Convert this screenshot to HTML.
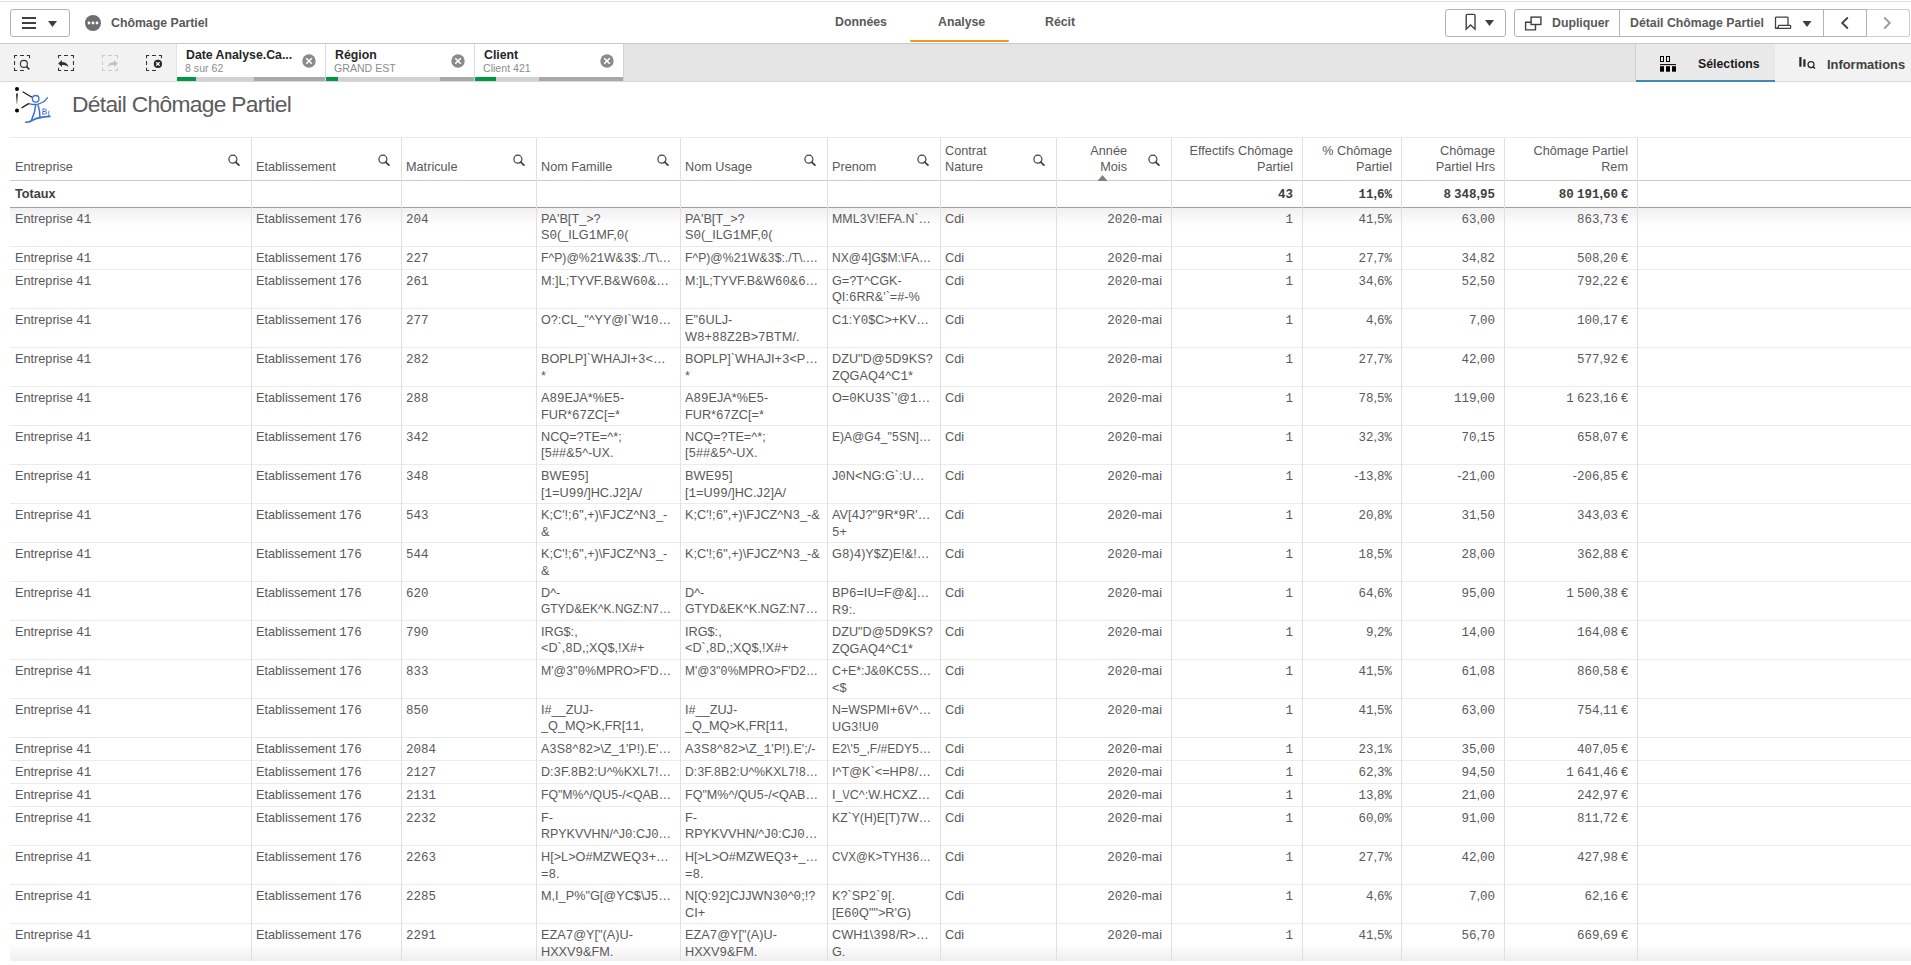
<!DOCTYPE html>
<html><head><meta charset="utf-8">
<style>
*{box-sizing:border-box}
html,body{margin:0;padding:0}
body{width:1911px;height:965px;overflow:hidden;background:#fff;position:relative;font-family:"Liberation Sans",sans-serif;color:#595959}
.a{position:absolute}
.b{font-weight:700}
.topline{left:0;top:1px;width:1911px;height:1px;background:#dcdde2}
.btn{border:1px solid #b3b3b3;border-radius:3px;background:#fff}
.tab{top:15px;font-size:12.3px;font-weight:700;color:#595959;white-space:nowrap}
.tbar{left:0;top:43px;width:1911px;height:39px;background:#e4e4e4;border-top:1px solid #c8c8c8;border-bottom:1px solid #d9d9d9}
.chip{top:44px;height:37px;width:148px;background:#fff}
.chip .t{position:absolute;left:9px;top:4px;font-size:12.3px;font-weight:700;color:#262626;white-space:nowrap}
.chip .s{position:absolute;left:8px;top:18px;font-size:10.6px;color:#8c8c8c;white-space:nowrap}
.chip .x{position:absolute;left:125px;top:10px}
.pb{top:77px;height:4px}
.c{position:absolute;font-size:12.7px;line-height:16px;padding-top:3px;white-space:nowrap;color:#595959}
.c i{font-style:normal;font-family:"Liberation Mono",monospace;font-size:12.5px}
.c u{display:inline-block;width:3px}
.r{text-align:right}
.hl{position:absolute;left:10px;width:1901px;height:1px;background:#ebebeb}
.vl{position:absolute;top:138px;width:1px;height:823px;background:#e0e0e0}
.hd{position:absolute;font-size:12.7px;line-height:16px;white-space:nowrap;color:#595959}
.srch{position:absolute;top:153px;width:13px;height:13px}
.srch svg{display:block}
.tt{position:absolute;top:186px;font-size:12.7px;line-height:16px;font-weight:700;white-space:nowrap;color:#404040}
.tt i{font-style:normal;font-family:"Liberation Mono",monospace;font-size:12.5px}
.tt u{display:inline-block;width:3px}
.c{overflow:hidden}
.ln{font-weight:400;display:inline-block;transform-origin:0 0}
</style></head>
<body>
<div class="a topline"></div>

<!-- menu button -->
<div class="a btn" style="left:10px;top:9px;width:60px;height:28px"></div>
<div class="a" style="left:22px;top:17px;width:14px;height:2px;background:#404040"></div>
<div class="a" style="left:22px;top:22px;width:14px;height:2px;background:#404040"></div>
<div class="a" style="left:22px;top:27px;width:14px;height:2px;background:#404040"></div>
<svg class="a" style="left:48px;top:21px" width="9" height="6"><path d="M0 0H9L4.5 6Z" fill="#404040"/></svg>

<!-- dots circle -->
<svg class="a" style="left:85px;top:15px" width="16" height="16"><circle cx="8" cy="8" r="8" fill="#6e6e6e"/><circle cx="4" cy="8" r="1.4" fill="#fff"/><circle cx="8" cy="8" r="1.4" fill="#fff"/><circle cx="12" cy="8" r="1.4" fill="#fff"/></svg>
<div class="a tab" style="left:111px;top:16px;color:#595959">Chômage Partiel</div>

<!-- nav tabs -->
<div class="a tab" style="left:835px">Données</div>
<div class="a tab" style="left:938px">Analyse</div>
<div class="a tab" style="left:1045px">Récit</div>
<div class="a" style="left:910px;top:40px;width:99px;height:2px;background:#ef9a1a;border-radius:1px"></div>

<!-- right buttons -->
<div class="a btn" style="left:1445px;top:9px;width:61px;height:28px"></div>
<div class="a btn" style="left:1514px;top:9px;width:396px;height:28px"></div>
<div class="a" style="left:1619px;top:10px;width:1px;height:26px;background:#b3b3b3"></div>
<div class="a" style="left:1823px;top:10px;width:1px;height:26px;background:#b3b3b3"></div>
<div class="a" style="left:1867px;top:9px;width:43px;height:28px;border:1px solid #cfcfcf;border-left:0;border-radius:0 3px 3px 0;background:#fff"></div>
<div class="a" style="left:1866px;top:10px;width:1px;height:26px;background:#b3b3b3"></div>
<div class="a tab" style="left:1552px;top:16px">Dupliquer</div>
<div class="a tab" style="left:1630px;top:16px">Détail Chômage Partiel</div>

<!-- toolbar -->
<div class="a tbar"></div>
<div class="a" style="left:0;top:44px;width:176px;height:37px;background:#f2f2f2"></div>
<div class="a chip" style="left:177px"><div class="t">Date Analyse.Ca...</div><div class="s">8 sur 62</div><svg class="x" width="14" height="14" viewBox="0 0 14 14"><circle cx="7" cy="7" r="6.7" fill="#8a8a8a"/><path d="M4.2 4.2L9.8 9.8M9.8 4.2L4.2 9.8" stroke="#fff" stroke-width="1.6"/></svg></div>
<div class="a chip" style="left:326px"><div class="t">Région</div><div class="s">GRAND EST</div><svg class="x" width="14" height="14" viewBox="0 0 14 14"><circle cx="7" cy="7" r="6.7" fill="#8a8a8a"/><path d="M4.2 4.2L9.8 9.8M9.8 4.2L4.2 9.8" stroke="#fff" stroke-width="1.6"/></svg></div>
<div class="a chip" style="left:475px"><div class="t">Client</div><div class="s">Client 421</div><svg class="x" width="14" height="14" viewBox="0 0 14 14"><circle cx="7" cy="7" r="6.7" fill="#8a8a8a"/><path d="M4.2 4.2L9.8 9.8M9.8 4.2L4.2 9.8" stroke="#fff" stroke-width="1.6"/></svg></div>

<div class="a" style="left:325px;top:44px;width:1px;height:37px;background:#d9d9d9"></div>
<div class="a" style="left:474px;top:44px;width:1px;height:37px;background:#d9d9d9"></div>
<div class="a" style="left:623px;top:44px;width:1px;height:37px;background:#d4d4d4"></div>
<div class="a" style="left:1775px;top:44px;width:136px;height:37px;background:#f2f2f2"></div>
<div class="a" style="left:1635px;top:44px;width:140px;height:37px;background:#e9e9e9;border-left:1px solid #d0d0d0"></div>
<div class="a" style="left:1636px;top:80px;width:139px;height:2px;background:#3f8ab3"></div>
<div class="a tab" style="left:1698px;top:57px;color:#1a1a1a">Sélections</div>
<div class="a tab" style="left:1827px;top:57px;color:#404040;font-size:12.9px">Informations</div>


<!-- toolbar icons -->
<svg class="a" style="left:14px;top:55px" width="16" height="16" viewBox="0 0 16 16"><path d="M0.5 3.2V0.5H3.2M6 0.5H10M12.8 0.5H15.5V3.2M10 15.5H6M3.2 15.5H0.5V12.8M0.5 10V6" fill="none" stroke="#333" stroke-width="1.1"/><circle cx="9.9" cy="8.9" r="3.5" fill="none" stroke="#333" stroke-width="1.1"/><path d="M12.4 11.4L15.3 14.5" stroke="#333" stroke-width="1.7"/></svg>
<svg class="a" style="left:58px;top:55px" width="16" height="16" viewBox="0 0 16 16"><path d="M0.5 3.2V0.5H3.2M6 0.5H10M12.8 0.5H15.5V3.2M15.5 6V10M15.5 12.8V15.5H12.8M10 15.5H6M3.2 15.5H0.5V12.8" fill="none" stroke="#333" stroke-width="1.1"/><path d="M0.2 8.4L3.9 4.9V7C7.4 7 9.7 8.8 10.5 12C8.9 10.3 6.8 9.9 3.9 9.9V11.9Z" fill="#333"/></svg>
<svg class="a" style="left:102px;top:55px" width="16" height="16" viewBox="0 0 16 16"><path d="M0.5 3.2V0.5H3.2M6 0.5H10M12.8 0.5H15.5V3.2M15.5 12.8V15.5H12.8M10 15.5H6M3.2 15.5H0.5V12.8M0.5 10V6" fill="none" stroke="#c9c9c9" stroke-width="1.1"/><path d="M15.8 8.4L12.1 4.9V7C8.6 7 6.3 8.8 5.5 12C7.1 10.3 9.2 9.9 12.1 9.9V11.9Z" fill="#c4c4c4"/></svg>
<svg class="a" style="left:146px;top:55px" width="16" height="16" viewBox="0 0 16 16"><path d="M0.5 3.2V0.5H3.2M6 0.5H10M12.8 0.5H15.5V3.2M10 15.5H6M3.2 15.5H0.5V12.8M0.5 10V6" fill="none" stroke="#333" stroke-width="1.1"/><circle cx="11.9" cy="8.9" r="4.1" fill="#262626"/><path d="M10.2 7.2L13.6 10.6M13.6 7.2L10.2 10.6" stroke="#fff" stroke-width="1.3"/></svg>

<!-- chip progress bars -->
<div class="a pb" style="left:177px;width:19px;background:#009845"></div>
<div class="a pb" style="left:196px;width:58px;background:#d2d2d2"></div>
<div class="a pb" style="left:254px;width:71px;background:#a8a8a8"></div>
<div class="a pb" style="left:326px;width:12px;background:#009845"></div>
<div class="a pb" style="left:338px;width:102px;background:#d2d2d2"></div>
<div class="a pb" style="left:440px;width:34px;background:#a8a8a8"></div>
<div class="a pb" style="left:475px;width:21px;background:#009845"></div>
<div class="a pb" style="left:496px;width:43px;background:#d2d2d2"></div>
<div class="a pb" style="left:539px;width:84px;background:#a8a8a8"></div>

<!-- selections icon -->
<svg class="a" style="left:1660px;top:56px" width="17" height="16" viewBox="0 0 17 16"><rect x="0.5" y="0.5" width="3" height="5" fill="none" stroke="#000" stroke-width="1"/><rect x="6.5" y="0.5" width="3" height="5" fill="none" stroke="#000" stroke-width="1"/><rect x="0" y="8.1" width="16" height="1" fill="#000"/><rect x="0" y="10.2" width="4" height="5.5" fill="#000"/><rect x="6" y="10.2" width="4" height="5.5" fill="#000"/><rect x="12" y="10.2" width="4" height="5.5" fill="#000"/></svg>
<!-- insights icon -->
<svg class="a" style="left:1798px;top:56px" width="18" height="14" viewBox="0 0 18 14"><rect x="1.3" y="1" width="2.2" height="9.7" fill="#262626"/><rect x="5.3" y="3.3" width="2.2" height="7.4" fill="#262626"/><circle cx="13" cy="8.6" r="3" fill="none" stroke="#262626" stroke-width="1.2"/><path d="M15.1 10.7L17 12.6" stroke="#262626" stroke-width="1.4"/></svg>

<!-- bookmark -->
<svg class="a" style="left:1464px;top:13px" width="13" height="18" viewBox="0 0 13 18"><path d="M2.2 16.2V2.6Q2.2 1.4 3.4 1.4H9.8Q11 1.4 11 2.6V16.2L6.6 12Z" fill="none" stroke="#404040" stroke-width="1.4" stroke-linejoin="miter"/></svg>
<svg class="a" style="left:1485px;top:20px" width="9" height="6"><path d="M0 0H9L4.5 6Z" fill="#404040"/></svg>
<!-- duplicate -->
<svg class="a" style="left:1524px;top:16px" width="19" height="16" viewBox="0 0 19 16"><rect x="7.1" y="1.1" width="9.8" height="7.4" fill="none" stroke="#404040" stroke-width="1.4"/><path d="M7.1 6.2H1.6V13.9H11.5V8.5" fill="none" stroke="#404040" stroke-width="1.4"/></svg>
<!-- sheet icon -->
<svg class="a" style="left:1774px;top:16px" width="18" height="14" viewBox="0 0 18 14"><path d="M4.5 12.4H2.2Q1.5 12.4 1.5 11.7V1.9Q1.5 1.2 2.2 1.2H13.3Q14 1.2 14 1.9V9.2" fill="none" stroke="#404040" stroke-width="1.3"/><path d="M5.2 9.3H15.9Q16.6 9.3 16.6 10V11.7Q16.6 12.4 15.9 12.4H2.2Q4.5 12.4 4.5 10Q4.5 9.3 5.2 9.3Z" fill="none" stroke="#404040" stroke-width="1.3"/></svg>
<svg class="a" style="left:1802px;top:21px" width="10" height="6"><path d="M0.5 0H9.5L5 6Z" fill="#404040"/></svg>
<!-- chevrons -->
<svg class="a" style="left:1839px;top:16px" width="12" height="14" viewBox="0 0 12 14"><path d="M8.8 1.5L3.2 7L8.8 12.5" fill="none" stroke="#404040" stroke-width="1.8"/></svg>
<svg class="a" style="left:1881px;top:16px" width="12" height="14" viewBox="0 0 12 14"><path d="M3.2 1.5L8.8 7L3.2 12.5" fill="none" stroke="#9a9a9a" stroke-width="1.8"/></svg>

<!-- logo -->
<svg class="a" style="left:12px;top:84px" width="44" height="42" viewBox="0 0 44 42">
<defs><linearGradient id="lg" x1="0" y1="0" x2="0" y2="1"><stop offset="0" stop-color="#000"/><stop offset="1" stop-color="#000" stop-opacity="0.15"/></linearGradient></defs>
<circle cx="5" cy="5" r="2" fill="#000"/><circle cx="5" cy="26.5" r="2" fill="#000"/>
<path d="M5 9.5L4.8 20" stroke="url(#lg)" stroke-width="1.6"/>
<path d="M10.6 7.8L20 13.3" stroke="#111" stroke-width="1.1"/>
<path d="M9.5 24L17 19.4" stroke="#111" stroke-width="1.3"/>
<g fill="none" stroke="#3b6fd6" stroke-linecap="round">
<circle cx="23.7" cy="14.8" r="3.3" stroke-width="1.3"/>
<path d="M17 19.6Q23 21.5 28 19.5T35.4 13.8" stroke-width="1.3"/>
<path d="M23.7 20.8Q23 29 19.6 35.8" stroke-width="1.5"/>
<path d="M26 20.6Q28 27 28 34" stroke-width="1.5"/>
<path d="M13.8 38Q16 39 21 36T38 32.4" stroke-width="1.6"/>
<path d="M31.2 25L30.6 30M31.2 25Q35.2 24.3 34.2 26.8Q33 27.6 31 27.5Q35.8 27.4 34.4 29.6Q33 30.6 30.6 30" stroke-width="0.9"/>
<path d="M36.8 27.2L36.6 32.2M35.8 32.4H38" stroke-width="0.8"/>
</g>
</svg>

<!-- title -->
<div class="a" style="left:72px;top:91px;font-size:22.8px;letter-spacing:-0.7px;color:#5c5c5c;white-space:nowrap">Détail Chômage Partiel</div>

<!--TABLE-->
<div class="a" style="left:10px;top:137px;width:1901px;height:1px;background:#ebebeb"></div>
<div class="a" style="left:10px;top:180px;width:1901px;height:1px;background:#cccccc"></div>
<div class="a" style="left:10px;top:207px;width:1901px;height:1px;background:#a0a0a0"></div>
<div id="tb" class="a" style="left:10px;top:208px;width:1901px;height:753px;overflow:hidden">
<div class="a" style="left:0;top:0;width:1901px;height:18px;background:linear-gradient(#f0f0f0,rgba(255,255,255,0))"></div>
<div class="a" style="left:0;bottom:0;width:1901px;height:18px;background:linear-gradient(rgba(255,255,255,0),#efefef)"></div>
<div class="a" style="left:-10px;top:-208px;width:1911px;height:1200px">
<div class="c" style="left:15px;width:230px;top:208px">Entreprise <i>41</i></div>
<div class="c" style="left:256px;width:139px;top:208px">Etablissement <i>176</i></div>
<div class="c" style="left:406px;width:124px;top:208px"><i>204</i></div>
<div class="c" style="left:541px;width:133px;top:208px"><b class="ln">PA'B[T_&gt;?</b><br><b class="ln">S<i>0</i>(_ILG<i>1</i>MF,<i>0</i>(</b></div>
<div class="c" style="left:685px;width:136px;top:208px"><b class="ln">PA'B[T_&gt;?</b><br><b class="ln">S<i>0</i>(_ILG<i>1</i>MF,<i>0</i>(</b></div>
<div class="c" style="left:832px;width:102px;top:208px"><b class="ln" style="transform:scaleX(0.9775)">MML<i>3</i>V!EFA.N`…</b></div>
<div class="c" style="left:945px;width:105px;top:208px">Cdi</div>
<div class="c r" style="left:971px;width:191px;top:208px"><i>2020</i>-mai</div>
<div class="c r" style="left:1102px;width:191px;top:208px"><i>1</i></div>
<div class="c r" style="left:1201px;width:191px;top:208px"><i>41</i>,<i>5%</i></div>
<div class="c r" style="left:1304px;width:191px;top:208px"><i>63</i>,<i>00</i></div>
<div class="c r" style="left:1437px;width:191px;top:208px"><i>863</i>,<i>73</i><u></u>€</div>
<div class="hl" style="top:246px"></div>
<div class="c" style="left:15px;width:230px;top:247px">Entreprise <i>41</i></div>
<div class="c" style="left:256px;width:139px;top:247px">Etablissement <i>176</i></div>
<div class="c" style="left:406px;width:124px;top:247px"><i>227</i></div>
<div class="c" style="left:541px;width:133px;top:247px"><b class="ln" style="transform:scaleX(0.9620)">F^P)@%<i>21</i>W&amp;<i>3</i>$:./T\…</b></div>
<div class="c" style="left:685px;width:136px;top:247px"><b class="ln" style="transform:scaleX(0.9591)">F^P)@%<i>21</i>W&amp;<i>3</i>$:./T\.…</b></div>
<div class="c" style="left:832px;width:102px;top:247px"><b class="ln" style="transform:scaleX(0.9491)">NX@<i>4</i>]G$M:\FA…</b></div>
<div class="c" style="left:945px;width:105px;top:247px">Cdi</div>
<div class="c r" style="left:971px;width:191px;top:247px"><i>2020</i>-mai</div>
<div class="c r" style="left:1102px;width:191px;top:247px"><i>1</i></div>
<div class="c r" style="left:1201px;width:191px;top:247px"><i>27</i>,<i>7%</i></div>
<div class="c r" style="left:1304px;width:191px;top:247px"><i>34</i>,<i>82</i></div>
<div class="c r" style="left:1437px;width:191px;top:247px"><i>508</i>,<i>20</i><u></u>€</div>
<div class="hl" style="top:269px"></div>
<div class="c" style="left:15px;width:230px;top:270px">Entreprise <i>41</i></div>
<div class="c" style="left:256px;width:139px;top:270px">Etablissement <i>176</i></div>
<div class="c" style="left:406px;width:124px;top:270px"><i>261</i></div>
<div class="c" style="left:541px;width:133px;top:270px"><b class="ln">M:]L;TYVF.B&amp;W<i>60</i>&amp;…</b></div>
<div class="c" style="left:685px;width:136px;top:270px"><b class="ln" style="transform:scaleX(0.9827)">M:]L;TYVF.B&amp;W<i>60</i>&amp;<i>6</i>…</b></div>
<div class="c" style="left:832px;width:102px;top:270px"><b class="ln">G=?T^CGK-</b><br><b class="ln">QI:<i>6</i>RR&amp;'`=#-%</b></div>
<div class="c" style="left:945px;width:105px;top:270px">Cdi</div>
<div class="c r" style="left:971px;width:191px;top:270px"><i>2020</i>-mai</div>
<div class="c r" style="left:1102px;width:191px;top:270px"><i>1</i></div>
<div class="c r" style="left:1201px;width:191px;top:270px"><i>34</i>,<i>6%</i></div>
<div class="c r" style="left:1304px;width:191px;top:270px"><i>52</i>,<i>50</i></div>
<div class="c r" style="left:1437px;width:191px;top:270px"><i>792</i>,<i>22</i><u></u>€</div>
<div class="hl" style="top:308px"></div>
<div class="c" style="left:15px;width:230px;top:309px">Entreprise <i>41</i></div>
<div class="c" style="left:256px;width:139px;top:309px">Etablissement <i>176</i></div>
<div class="c" style="left:406px;width:124px;top:309px"><i>277</i></div>
<div class="c" style="left:541px;width:133px;top:309px"><b class="ln" style="transform:scaleX(0.9892)">O?:CL_"^YY@I`W<i>10</i>…</b></div>
<div class="c" style="left:685px;width:136px;top:309px"><b class="ln">E"<i>6</i>ULJ-</b><br><b class="ln">W<i>8</i>+<i>88</i>Z<i>2</i>B&gt;<i>7</i>BTM/.</b></div>
<div class="c" style="left:832px;width:102px;top:309px"><b class="ln">C<i>1</i>:Y<i>0</i>$C&gt;+KV…</b></div>
<div class="c" style="left:945px;width:105px;top:309px">Cdi</div>
<div class="c r" style="left:971px;width:191px;top:309px"><i>2020</i>-mai</div>
<div class="c r" style="left:1102px;width:191px;top:309px"><i>1</i></div>
<div class="c r" style="left:1201px;width:191px;top:309px"><i>4</i>,<i>6%</i></div>
<div class="c r" style="left:1304px;width:191px;top:309px"><i>7</i>,<i>00</i></div>
<div class="c r" style="left:1437px;width:191px;top:309px"><i>100</i>,<i>17</i><u></u>€</div>
<div class="hl" style="top:347px"></div>
<div class="c" style="left:15px;width:230px;top:348px">Entreprise <i>41</i></div>
<div class="c" style="left:256px;width:139px;top:348px">Etablissement <i>176</i></div>
<div class="c" style="left:406px;width:124px;top:348px"><i>282</i></div>
<div class="c" style="left:541px;width:133px;top:348px"><b class="ln">BOPLP]`WHAJI+<i>3</i>&lt;…</b><br><b class="ln">*</b></div>
<div class="c" style="left:685px;width:136px;top:348px"><b class="ln" style="transform:scaleX(0.9998)">BOPLP]`WHAJI+<i>3</i>&lt;P…</b><br><b class="ln">*</b></div>
<div class="c" style="left:832px;width:102px;top:348px"><b class="ln">DZU"D@<i>5</i>D<i>9</i>KS?</b><br><b class="ln">ZQGAQ<i>4</i>^C<i>1</i>*</b></div>
<div class="c" style="left:945px;width:105px;top:348px">Cdi</div>
<div class="c r" style="left:971px;width:191px;top:348px"><i>2020</i>-mai</div>
<div class="c r" style="left:1102px;width:191px;top:348px"><i>1</i></div>
<div class="c r" style="left:1201px;width:191px;top:348px"><i>27</i>,<i>7%</i></div>
<div class="c r" style="left:1304px;width:191px;top:348px"><i>42</i>,<i>00</i></div>
<div class="c r" style="left:1437px;width:191px;top:348px"><i>577</i>,<i>92</i><u></u>€</div>
<div class="hl" style="top:386px"></div>
<div class="c" style="left:15px;width:230px;top:387px">Entreprise <i>41</i></div>
<div class="c" style="left:256px;width:139px;top:387px">Etablissement <i>176</i></div>
<div class="c" style="left:406px;width:124px;top:387px"><i>288</i></div>
<div class="c" style="left:541px;width:133px;top:387px"><b class="ln">A<i>89</i>EJA*%E<i>5</i>-</b><br><b class="ln">FUR*<i>67</i>ZC[=*</b></div>
<div class="c" style="left:685px;width:136px;top:387px"><b class="ln">A<i>89</i>EJA*%E<i>5</i>-</b><br><b class="ln">FUR*<i>67</i>ZC[=*</b></div>
<div class="c" style="left:832px;width:102px;top:387px"><b class="ln">O=<i>0</i>KU<i>3</i>S`'@<i>1</i>…</b></div>
<div class="c" style="left:945px;width:105px;top:387px">Cdi</div>
<div class="c r" style="left:971px;width:191px;top:387px"><i>2020</i>-mai</div>
<div class="c r" style="left:1102px;width:191px;top:387px"><i>1</i></div>
<div class="c r" style="left:1201px;width:191px;top:387px"><i>78</i>,<i>5%</i></div>
<div class="c r" style="left:1304px;width:191px;top:387px"><i>119</i>,<i>00</i></div>
<div class="c r" style="left:1437px;width:191px;top:387px"><i>1</i><u></u><i>623</i>,<i>16</i><u></u>€</div>
<div class="hl" style="top:425px"></div>
<div class="c" style="left:15px;width:230px;top:426px">Entreprise <i>41</i></div>
<div class="c" style="left:256px;width:139px;top:426px">Etablissement <i>176</i></div>
<div class="c" style="left:406px;width:124px;top:426px"><i>342</i></div>
<div class="c" style="left:541px;width:133px;top:426px"><b class="ln">NCQ=?TE=^*;</b><br><b class="ln">[<i>5</i>##&amp;<i>5</i>^-UX.</b></div>
<div class="c" style="left:685px;width:136px;top:426px"><b class="ln">NCQ=?TE=^*;</b><br><b class="ln">[<i>5</i>##&amp;<i>5</i>^-UX.</b></div>
<div class="c" style="left:832px;width:102px;top:426px"><b class="ln" style="transform:scaleX(0.9488)">E)A@G<i>4</i>_"<i>5</i>SN]…</b></div>
<div class="c" style="left:945px;width:105px;top:426px">Cdi</div>
<div class="c r" style="left:971px;width:191px;top:426px"><i>2020</i>-mai</div>
<div class="c r" style="left:1102px;width:191px;top:426px"><i>1</i></div>
<div class="c r" style="left:1201px;width:191px;top:426px"><i>32</i>,<i>3%</i></div>
<div class="c r" style="left:1304px;width:191px;top:426px"><i>70</i>,<i>15</i></div>
<div class="c r" style="left:1437px;width:191px;top:426px"><i>658</i>,<i>07</i><u></u>€</div>
<div class="hl" style="top:464px"></div>
<div class="c" style="left:15px;width:230px;top:465px">Entreprise <i>41</i></div>
<div class="c" style="left:256px;width:139px;top:465px">Etablissement <i>176</i></div>
<div class="c" style="left:406px;width:124px;top:465px"><i>348</i></div>
<div class="c" style="left:541px;width:133px;top:465px"><b class="ln">BWE<i>95</i>]</b><br><b class="ln">[<i>1</i>=U<i>99</i>/]HC.J<i>2</i>]A/</b></div>
<div class="c" style="left:685px;width:136px;top:465px"><b class="ln">BWE<i>95</i>]</b><br><b class="ln">[<i>1</i>=U<i>99</i>/]HC.J<i>2</i>]A/</b></div>
<div class="c" style="left:832px;width:102px;top:465px"><b class="ln">J<i>0</i>N&lt;NG:G`:U…</b></div>
<div class="c" style="left:945px;width:105px;top:465px">Cdi</div>
<div class="c r" style="left:971px;width:191px;top:465px"><i>2020</i>-mai</div>
<div class="c r" style="left:1102px;width:191px;top:465px"><i>1</i></div>
<div class="c r" style="left:1201px;width:191px;top:465px">-<i>13</i>,<i>8%</i></div>
<div class="c r" style="left:1304px;width:191px;top:465px">-<i>21</i>,<i>00</i></div>
<div class="c r" style="left:1437px;width:191px;top:465px">-<i>206</i>,<i>85</i><u></u>€</div>
<div class="hl" style="top:503px"></div>
<div class="c" style="left:15px;width:230px;top:504px">Entreprise <i>41</i></div>
<div class="c" style="left:256px;width:139px;top:504px">Etablissement <i>176</i></div>
<div class="c" style="left:406px;width:124px;top:504px"><i>543</i></div>
<div class="c" style="left:541px;width:133px;top:504px"><b class="ln">K;C'!;<i>6</i>",+)\FJCZ^N<i>3</i>_-</b><br><b class="ln">&amp;</b></div>
<div class="c" style="left:685px;width:136px;top:504px"><b class="ln">K;C'!;<i>6</i>",+)\FJCZ^N<i>3</i>_-&amp;</b></div>
<div class="c" style="left:832px;width:102px;top:504px"><b class="ln">AV[<i>4</i>J?"<i>9</i>R*<i>9</i>R'…</b><br><b class="ln"><i>5</i>+</b></div>
<div class="c" style="left:945px;width:105px;top:504px">Cdi</div>
<div class="c r" style="left:971px;width:191px;top:504px"><i>2020</i>-mai</div>
<div class="c r" style="left:1102px;width:191px;top:504px"><i>1</i></div>
<div class="c r" style="left:1201px;width:191px;top:504px"><i>20</i>,<i>8%</i></div>
<div class="c r" style="left:1304px;width:191px;top:504px"><i>31</i>,<i>50</i></div>
<div class="c r" style="left:1437px;width:191px;top:504px"><i>343</i>,<i>03</i><u></u>€</div>
<div class="hl" style="top:542px"></div>
<div class="c" style="left:15px;width:230px;top:543px">Entreprise <i>41</i></div>
<div class="c" style="left:256px;width:139px;top:543px">Etablissement <i>176</i></div>
<div class="c" style="left:406px;width:124px;top:543px"><i>544</i></div>
<div class="c" style="left:541px;width:133px;top:543px"><b class="ln">K;C'!;<i>6</i>",+)\FJCZ^N<i>3</i>_-</b><br><b class="ln">&amp;</b></div>
<div class="c" style="left:685px;width:136px;top:543px"><b class="ln">K;C'!;<i>6</i>",+)\FJCZ^N<i>3</i>_-&amp;</b></div>
<div class="c" style="left:832px;width:102px;top:543px"><b class="ln">G<i>8</i>)<i>4</i>)Y$Z)E!&amp;!…</b></div>
<div class="c" style="left:945px;width:105px;top:543px">Cdi</div>
<div class="c r" style="left:971px;width:191px;top:543px"><i>2020</i>-mai</div>
<div class="c r" style="left:1102px;width:191px;top:543px"><i>1</i></div>
<div class="c r" style="left:1201px;width:191px;top:543px"><i>18</i>,<i>5%</i></div>
<div class="c r" style="left:1304px;width:191px;top:543px"><i>28</i>,<i>00</i></div>
<div class="c r" style="left:1437px;width:191px;top:543px"><i>362</i>,<i>88</i><u></u>€</div>
<div class="hl" style="top:581px"></div>
<div class="c" style="left:15px;width:230px;top:582px">Entreprise <i>41</i></div>
<div class="c" style="left:256px;width:139px;top:582px">Etablissement <i>176</i></div>
<div class="c" style="left:406px;width:124px;top:582px"><i>620</i></div>
<div class="c" style="left:541px;width:133px;top:582px"><b class="ln">D^-</b><br><b class="ln" style="transform:scaleX(0.9403)">GTYD&amp;EK^K.NGZ:N<i>7</i>…</b></div>
<div class="c" style="left:685px;width:136px;top:582px"><b class="ln">D^-</b><br><b class="ln" style="transform:scaleX(0.9620)">GTYD&amp;EK^K.NGZ:N<i>7</i>…</b></div>
<div class="c" style="left:832px;width:102px;top:582px"><b class="ln">BP<i>6</i>=IU=F@&amp;]…</b><br><b class="ln">R<i>9</i>:.</b></div>
<div class="c" style="left:945px;width:105px;top:582px">Cdi</div>
<div class="c r" style="left:971px;width:191px;top:582px"><i>2020</i>-mai</div>
<div class="c r" style="left:1102px;width:191px;top:582px"><i>1</i></div>
<div class="c r" style="left:1201px;width:191px;top:582px"><i>64</i>,<i>6%</i></div>
<div class="c r" style="left:1304px;width:191px;top:582px"><i>95</i>,<i>00</i></div>
<div class="c r" style="left:1437px;width:191px;top:582px"><i>1</i><u></u><i>500</i>,<i>38</i><u></u>€</div>
<div class="hl" style="top:620px"></div>
<div class="c" style="left:15px;width:230px;top:621px">Entreprise <i>41</i></div>
<div class="c" style="left:256px;width:139px;top:621px">Etablissement <i>176</i></div>
<div class="c" style="left:406px;width:124px;top:621px"><i>790</i></div>
<div class="c" style="left:541px;width:133px;top:621px"><b class="ln">IRG$:,</b><br><b class="ln">&lt;D`,<i>8</i>D,;XQ$,!X#+</b></div>
<div class="c" style="left:685px;width:136px;top:621px"><b class="ln">IRG$:,</b><br><b class="ln">&lt;D`,<i>8</i>D,;XQ$,!X#+</b></div>
<div class="c" style="left:832px;width:102px;top:621px"><b class="ln">DZU"D@<i>5</i>D<i>9</i>KS?</b><br><b class="ln">ZQGAQ<i>4</i>^C<i>1</i>*</b></div>
<div class="c" style="left:945px;width:105px;top:621px">Cdi</div>
<div class="c r" style="left:971px;width:191px;top:621px"><i>2020</i>-mai</div>
<div class="c r" style="left:1102px;width:191px;top:621px"><i>1</i></div>
<div class="c r" style="left:1201px;width:191px;top:621px"><i>9</i>,<i>2%</i></div>
<div class="c r" style="left:1304px;width:191px;top:621px"><i>14</i>,<i>00</i></div>
<div class="c r" style="left:1437px;width:191px;top:621px"><i>164</i>,<i>08</i><u></u>€</div>
<div class="hl" style="top:659px"></div>
<div class="c" style="left:15px;width:230px;top:660px">Entreprise <i>41</i></div>
<div class="c" style="left:256px;width:139px;top:660px">Etablissement <i>176</i></div>
<div class="c" style="left:406px;width:124px;top:660px"><i>833</i></div>
<div class="c" style="left:541px;width:133px;top:660px"><b class="ln" style="transform:scaleX(0.9687)">M'@<i>3</i>"<i>0</i>%MPRO&gt;F'D…</b></div>
<div class="c" style="left:685px;width:136px;top:660px"><b class="ln" style="transform:scaleX(0.9385)">M'@<i>3</i>"<i>0</i>%MPRO&gt;F'D<i>2</i>…</b></div>
<div class="c" style="left:832px;width:102px;top:660px"><b class="ln" style="transform:scaleX(0.9694)">C+E*:J&amp;<i>0</i>KC<i>5</i>S…</b><br><b class="ln">&lt;$</b></div>
<div class="c" style="left:945px;width:105px;top:660px">Cdi</div>
<div class="c r" style="left:971px;width:191px;top:660px"><i>2020</i>-mai</div>
<div class="c r" style="left:1102px;width:191px;top:660px"><i>1</i></div>
<div class="c r" style="left:1201px;width:191px;top:660px"><i>41</i>,<i>5%</i></div>
<div class="c r" style="left:1304px;width:191px;top:660px"><i>61</i>,<i>08</i></div>
<div class="c r" style="left:1437px;width:191px;top:660px"><i>860</i>,<i>58</i><u></u>€</div>
<div class="hl" style="top:698px"></div>
<div class="c" style="left:15px;width:230px;top:699px">Entreprise <i>41</i></div>
<div class="c" style="left:256px;width:139px;top:699px">Etablissement <i>176</i></div>
<div class="c" style="left:406px;width:124px;top:699px"><i>850</i></div>
<div class="c" style="left:541px;width:133px;top:699px"><b class="ln">I#__ZUJ-</b><br><b class="ln">_Q_MQ&gt;K,FR[<i>11</i>,</b></div>
<div class="c" style="left:685px;width:136px;top:699px"><b class="ln">I#__ZUJ-</b><br><b class="ln">_Q_MQ&gt;K,FR[<i>11</i>,</b></div>
<div class="c" style="left:832px;width:102px;top:699px"><b class="ln" style="transform:scaleX(0.9743)">N=WSPMI+<i>6</i>V^…</b><br><b class="ln">UG<i>3</i>!U<i>0</i></b></div>
<div class="c" style="left:945px;width:105px;top:699px">Cdi</div>
<div class="c r" style="left:971px;width:191px;top:699px"><i>2020</i>-mai</div>
<div class="c r" style="left:1102px;width:191px;top:699px"><i>1</i></div>
<div class="c r" style="left:1201px;width:191px;top:699px"><i>41</i>,<i>5%</i></div>
<div class="c r" style="left:1304px;width:191px;top:699px"><i>63</i>,<i>00</i></div>
<div class="c r" style="left:1437px;width:191px;top:699px"><i>754</i>,<i>11</i><u></u>€</div>
<div class="hl" style="top:737px"></div>
<div class="c" style="left:15px;width:230px;top:738px">Entreprise <i>41</i></div>
<div class="c" style="left:256px;width:139px;top:738px">Etablissement <i>176</i></div>
<div class="c" style="left:406px;width:124px;top:738px"><i>2084</i></div>
<div class="c" style="left:541px;width:133px;top:738px"><b class="ln" style="transform:scaleX(0.9852)">A<i>3</i>S<i>8</i>^<i>82</i>&gt;\Z_<i>1</i>'P!).E'…</b></div>
<div class="c" style="left:685px;width:136px;top:738px"><b class="ln">A<i>3</i>S<i>8</i>^<i>82</i>&gt;\Z_<i>1</i>'P!).E';/-</b></div>
<div class="c" style="left:832px;width:102px;top:738px"><b class="ln" style="transform:scaleX(0.9460)">E<i>2</i>\'<i>5</i>_,F/#EDY<i>5</i>…</b></div>
<div class="c" style="left:945px;width:105px;top:738px">Cdi</div>
<div class="c r" style="left:971px;width:191px;top:738px"><i>2020</i>-mai</div>
<div class="c r" style="left:1102px;width:191px;top:738px"><i>1</i></div>
<div class="c r" style="left:1201px;width:191px;top:738px"><i>23</i>,<i>1%</i></div>
<div class="c r" style="left:1304px;width:191px;top:738px"><i>35</i>,<i>00</i></div>
<div class="c r" style="left:1437px;width:191px;top:738px"><i>407</i>,<i>05</i><u></u>€</div>
<div class="hl" style="top:760px"></div>
<div class="c" style="left:15px;width:230px;top:761px">Entreprise <i>41</i></div>
<div class="c" style="left:256px;width:139px;top:761px">Etablissement <i>176</i></div>
<div class="c" style="left:406px;width:124px;top:761px"><i>2127</i></div>
<div class="c" style="left:541px;width:133px;top:761px"><b class="ln" style="transform:scaleX(0.9907)">D:<i>3</i>F.<i>8</i>B<i>2</i>:U^%KXL<i>7</i>!…</b></div>
<div class="c" style="left:685px;width:136px;top:761px"><b class="ln" style="transform:scaleX(0.9587)">D:<i>3</i>F.<i>8</i>B<i>2</i>:U^%KXL<i>7</i>!<i>8</i>…</b></div>
<div class="c" style="left:832px;width:102px;top:761px"><b class="ln">I^T@K`&lt;=HP<i>8</i>/…</b></div>
<div class="c" style="left:945px;width:105px;top:761px">Cdi</div>
<div class="c r" style="left:971px;width:191px;top:761px"><i>2020</i>-mai</div>
<div class="c r" style="left:1102px;width:191px;top:761px"><i>1</i></div>
<div class="c r" style="left:1201px;width:191px;top:761px"><i>62</i>,<i>3%</i></div>
<div class="c r" style="left:1304px;width:191px;top:761px"><i>94</i>,<i>50</i></div>
<div class="c r" style="left:1437px;width:191px;top:761px"><i>1</i><u></u><i>641</i>,<i>46</i><u></u>€</div>
<div class="hl" style="top:783px"></div>
<div class="c" style="left:15px;width:230px;top:784px">Entreprise <i>41</i></div>
<div class="c" style="left:256px;width:139px;top:784px">Etablissement <i>176</i></div>
<div class="c" style="left:406px;width:124px;top:784px"><i>2131</i></div>
<div class="c" style="left:541px;width:133px;top:784px"><b class="ln" style="transform:scaleX(0.9655)">FQ"M%^/QU<i>5</i>-/&lt;QAB…</b></div>
<div class="c" style="left:685px;width:136px;top:784px"><b class="ln" style="transform:scaleX(0.9878)">FQ"M%^/QU<i>5</i>-/&lt;QAB…</b></div>
<div class="c" style="left:832px;width:102px;top:784px"><b class="ln">I_\/C^:W.HCXZ…</b></div>
<div class="c" style="left:945px;width:105px;top:784px">Cdi</div>
<div class="c r" style="left:971px;width:191px;top:784px"><i>2020</i>-mai</div>
<div class="c r" style="left:1102px;width:191px;top:784px"><i>1</i></div>
<div class="c r" style="left:1201px;width:191px;top:784px"><i>13</i>,<i>8%</i></div>
<div class="c r" style="left:1304px;width:191px;top:784px"><i>21</i>,<i>00</i></div>
<div class="c r" style="left:1437px;width:191px;top:784px"><i>242</i>,<i>97</i><u></u>€</div>
<div class="hl" style="top:806px"></div>
<div class="c" style="left:15px;width:230px;top:807px">Entreprise <i>41</i></div>
<div class="c" style="left:256px;width:139px;top:807px">Etablissement <i>176</i></div>
<div class="c" style="left:406px;width:124px;top:807px"><i>2232</i></div>
<div class="c" style="left:541px;width:133px;top:807px"><b class="ln">F-</b><br><b class="ln" style="transform:scaleX(0.9821)">RPYKVVHN/^J<i>0</i>:CJ<i>0</i>…</b></div>
<div class="c" style="left:685px;width:136px;top:807px"><b class="ln">F-</b><br><b class="ln">RPYKVVHN/^J<i>0</i>:CJ<i>0</i>…</b></div>
<div class="c" style="left:832px;width:102px;top:807px"><b class="ln" style="transform:scaleX(0.9642)">KZ`Y(H)E[T)<i>7</i>W…</b></div>
<div class="c" style="left:945px;width:105px;top:807px">Cdi</div>
<div class="c r" style="left:971px;width:191px;top:807px"><i>2020</i>-mai</div>
<div class="c r" style="left:1102px;width:191px;top:807px"><i>1</i></div>
<div class="c r" style="left:1201px;width:191px;top:807px"><i>60</i>,<i>0%</i></div>
<div class="c r" style="left:1304px;width:191px;top:807px"><i>91</i>,<i>00</i></div>
<div class="c r" style="left:1437px;width:191px;top:807px"><i>811</i>,<i>72</i><u></u>€</div>
<div class="hl" style="top:845px"></div>
<div class="c" style="left:15px;width:230px;top:846px">Entreprise <i>41</i></div>
<div class="c" style="left:256px;width:139px;top:846px">Etablissement <i>176</i></div>
<div class="c" style="left:406px;width:124px;top:846px"><i>2263</i></div>
<div class="c" style="left:541px;width:133px;top:846px"><b class="ln">H[&gt;L&gt;O#MZWEQ<i>3</i>+…</b><br><b class="ln">=<i>8</i>.</b></div>
<div class="c" style="left:685px;width:136px;top:846px"><b class="ln" style="transform:scaleX(0.9867)">H[&gt;L&gt;O#MZWEQ<i>3</i>+_…</b><br><b class="ln">=<i>8</i>.</b></div>
<div class="c" style="left:832px;width:102px;top:846px"><b class="ln" style="transform:scaleX(0.9173)">CVX@K&gt;TYH<i>36</i>…</b></div>
<div class="c" style="left:945px;width:105px;top:846px">Cdi</div>
<div class="c r" style="left:971px;width:191px;top:846px"><i>2020</i>-mai</div>
<div class="c r" style="left:1102px;width:191px;top:846px"><i>1</i></div>
<div class="c r" style="left:1201px;width:191px;top:846px"><i>27</i>,<i>7%</i></div>
<div class="c r" style="left:1304px;width:191px;top:846px"><i>42</i>,<i>00</i></div>
<div class="c r" style="left:1437px;width:191px;top:846px"><i>427</i>,<i>98</i><u></u>€</div>
<div class="hl" style="top:884px"></div>
<div class="c" style="left:15px;width:230px;top:885px">Entreprise <i>41</i></div>
<div class="c" style="left:256px;width:139px;top:885px">Etablissement <i>176</i></div>
<div class="c" style="left:406px;width:124px;top:885px"><i>2285</i></div>
<div class="c" style="left:541px;width:133px;top:885px"><b class="ln">M,I_P%"G[@YC$\J<i>5</i>…</b></div>
<div class="c" style="left:685px;width:136px;top:885px"><b class="ln">N[Q:<i>92</i>]CJJWN<i>30</i>^<i>0</i>;!?</b><br><b class="ln">CI+</b></div>
<div class="c" style="left:832px;width:102px;top:885px"><b class="ln">K?`SP<i>2</i>`<i>9</i>[.</b><br><b class="ln">[E<i>60</i>Q""&gt;R'G)</b></div>
<div class="c" style="left:945px;width:105px;top:885px">Cdi</div>
<div class="c r" style="left:971px;width:191px;top:885px"><i>2020</i>-mai</div>
<div class="c r" style="left:1102px;width:191px;top:885px"><i>1</i></div>
<div class="c r" style="left:1201px;width:191px;top:885px"><i>4</i>,<i>6%</i></div>
<div class="c r" style="left:1304px;width:191px;top:885px"><i>7</i>,<i>00</i></div>
<div class="c r" style="left:1437px;width:191px;top:885px"><i>62</i>,<i>16</i><u></u>€</div>
<div class="hl" style="top:923px"></div>
<div class="c" style="left:15px;width:230px;top:924px">Entreprise <i>41</i></div>
<div class="c" style="left:256px;width:139px;top:924px">Etablissement <i>176</i></div>
<div class="c" style="left:406px;width:124px;top:924px"><i>2291</i></div>
<div class="c" style="left:541px;width:133px;top:924px"><b class="ln">EZA<i>7</i>@Y["(A)U-</b><br><b class="ln">HXXV<i>9</i>&amp;FM.</b></div>
<div class="c" style="left:685px;width:136px;top:924px"><b class="ln">EZA<i>7</i>@Y["(A)U-</b><br><b class="ln">HXXV<i>9</i>&amp;FM.</b></div>
<div class="c" style="left:832px;width:102px;top:924px"><b class="ln">CWH<i>1</i>\<i>398</i>/R&gt;…</b><br><b class="ln">G.</b></div>
<div class="c" style="left:945px;width:105px;top:924px">Cdi</div>
<div class="c r" style="left:971px;width:191px;top:924px"><i>2020</i>-mai</div>
<div class="c r" style="left:1102px;width:191px;top:924px"><i>1</i></div>
<div class="c r" style="left:1201px;width:191px;top:924px"><i>41</i>,<i>5%</i></div>
<div class="c r" style="left:1304px;width:191px;top:924px"><i>56</i>,<i>70</i></div>
<div class="c r" style="left:1437px;width:191px;top:924px"><i>669</i>,<i>69</i><u></u>€</div>
<div class="hl" style="top:962px"></div>
</div>
</div>
<div class="vl" style="left:251px"></div><div class="vl" style="left:401px"></div><div class="vl" style="left:536px"></div><div class="vl" style="left:680px"></div><div class="vl" style="left:827px"></div><div class="vl" style="left:940px"></div><div class="vl" style="left:1056px"></div><div class="vl" style="left:1171px"></div><div class="vl" style="left:1302px"></div><div class="vl" style="left:1401px"></div><div class="vl" style="left:1504px"></div><div class="vl" style="left:1637px"></div>
<div class="hd" style="left:15px;top:159px">Entreprise</div>
<div class="srch" style="left:227px"><svg width="13" height="13" viewBox="0 0 13 13"><circle cx="5.9" cy="6.2" r="4" fill="none" stroke="#404040" stroke-width="1.2"/><path d="M9 9.3L11.9 12.1" stroke="#404040" stroke-width="1.8" stroke-linecap="round"/></svg></div>
<div class="hd" style="left:256px;top:159px">Etablissement</div>
<div class="srch" style="left:377px"><svg width="13" height="13" viewBox="0 0 13 13"><circle cx="5.9" cy="6.2" r="4" fill="none" stroke="#404040" stroke-width="1.2"/><path d="M9 9.3L11.9 12.1" stroke="#404040" stroke-width="1.8" stroke-linecap="round"/></svg></div>
<div class="hd" style="left:406px;top:159px">Matricule</div>
<div class="srch" style="left:512px"><svg width="13" height="13" viewBox="0 0 13 13"><circle cx="5.9" cy="6.2" r="4" fill="none" stroke="#404040" stroke-width="1.2"/><path d="M9 9.3L11.9 12.1" stroke="#404040" stroke-width="1.8" stroke-linecap="round"/></svg></div>
<div class="hd" style="left:541px;top:159px">Nom Famille</div>
<div class="srch" style="left:656px"><svg width="13" height="13" viewBox="0 0 13 13"><circle cx="5.9" cy="6.2" r="4" fill="none" stroke="#404040" stroke-width="1.2"/><path d="M9 9.3L11.9 12.1" stroke="#404040" stroke-width="1.8" stroke-linecap="round"/></svg></div>
<div class="hd" style="left:685px;top:159px">Nom Usage</div>
<div class="srch" style="left:803px"><svg width="13" height="13" viewBox="0 0 13 13"><circle cx="5.9" cy="6.2" r="4" fill="none" stroke="#404040" stroke-width="1.2"/><path d="M9 9.3L11.9 12.1" stroke="#404040" stroke-width="1.8" stroke-linecap="round"/></svg></div>
<div class="hd" style="left:832px;top:159px">Prenom</div>
<div class="srch" style="left:916px"><svg width="13" height="13" viewBox="0 0 13 13"><circle cx="5.9" cy="6.2" r="4" fill="none" stroke="#404040" stroke-width="1.2"/><path d="M9 9.3L11.9 12.1" stroke="#404040" stroke-width="1.8" stroke-linecap="round"/></svg></div>
<div class="hd" style="left:945px;top:143px">Contrat<br>Nature</div>
<div class="srch" style="left:1032px"><svg width="13" height="13" viewBox="0 0 13 13"><circle cx="5.9" cy="6.2" r="4" fill="none" stroke="#404040" stroke-width="1.2"/><path d="M9 9.3L11.9 12.1" stroke="#404040" stroke-width="1.8" stroke-linecap="round"/></svg></div>
<div class="hd r" style="left:927px;width:200px;top:143px">Année<br>Mois</div>
<div class="srch" style="left:1147px"><svg width="13" height="13" viewBox="0 0 13 13"><circle cx="5.9" cy="6.2" r="4" fill="none" stroke="#404040" stroke-width="1.2"/><path d="M9 9.3L11.9 12.1" stroke="#404040" stroke-width="1.8" stroke-linecap="round"/></svg></div>
<div class="hd r" style="left:1093px;width:200px;top:143px">Effectifs Chômage<br>Partiel</div>
<div class="hd r" style="left:1192px;width:200px;top:143px">% Chômage<br>Partiel</div>
<div class="hd r" style="left:1295px;width:200px;top:143px">Chômage<br>Partiel Hrs</div>
<div class="hd r" style="left:1428px;width:200px;top:143px">Chômage Partiel<br>Rem</div>
<svg class="a" style="left:1097px;top:174px" width="11" height="7"><path d="M0.5 7L5.5 1L10.5 7Z" fill="#7f7f7f"/></svg>
<div class="tt" style="left:15px">Totaux</div>
<div class="tt r" style="left:1093px;width:200px"><i>43</i></div>
<div class="tt r" style="left:1192px;width:200px"><i>11</i>,<i>6%</i></div>
<div class="tt r" style="left:1295px;width:200px"><i>8</i><u></u><i>348</i>,<i>95</i></div>
<div class="tt r" style="left:1428px;width:200px"><i>80</i><u></u><i>191</i>,<i>60</i><u></u>€</div>
<!--/TABLE-->
</body></html>
